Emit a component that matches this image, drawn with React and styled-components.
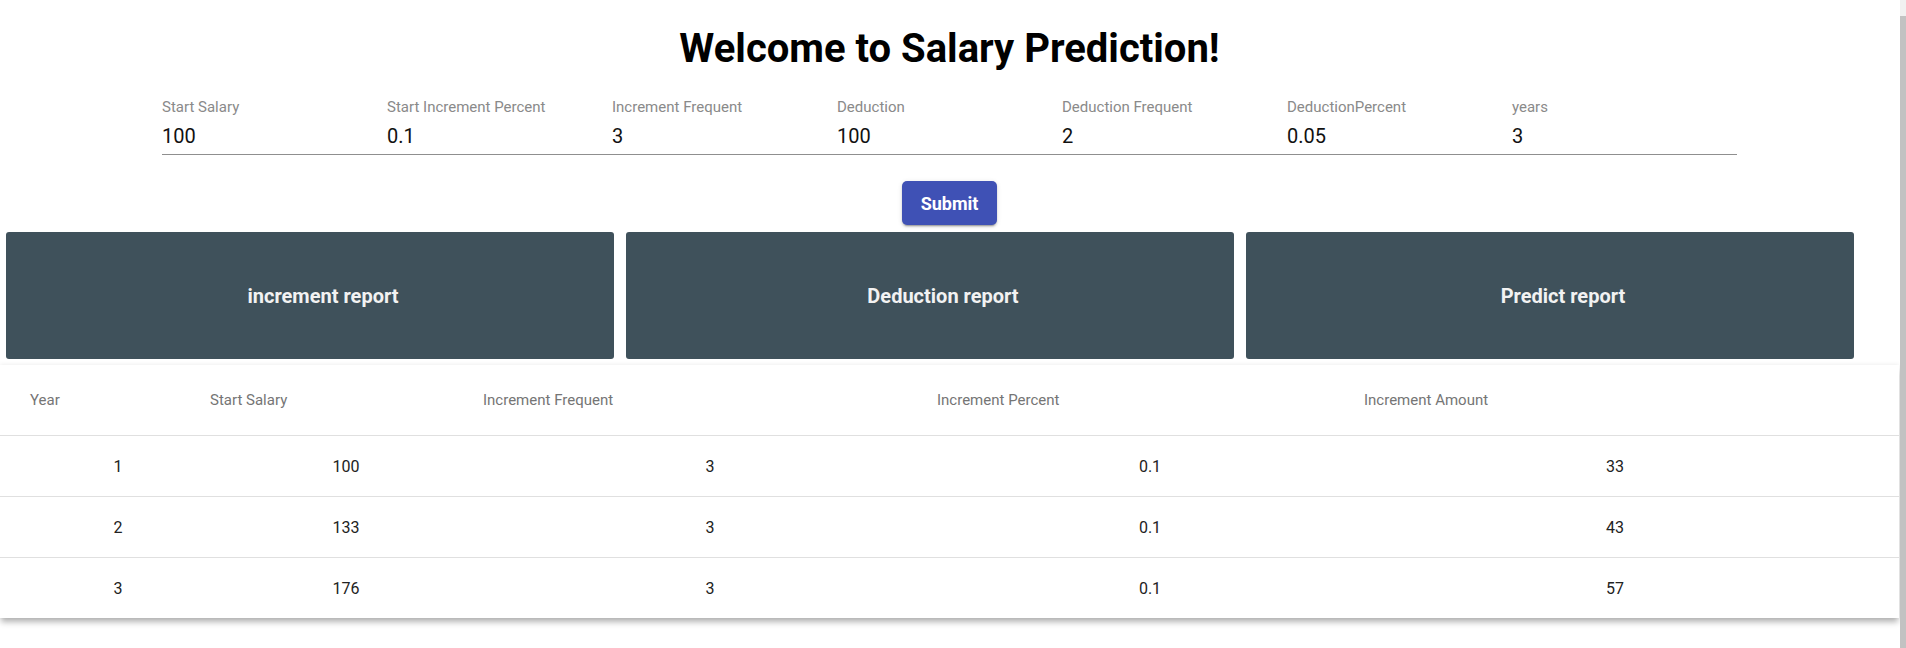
import React from "react"
import styled, { createGlobalStyle } from "styled-components"

const GlobalStyle = createGlobalStyle`
    body {
        margin: 0;
        background: #fff;
        font-family: Roboto, "Helvetica Neue", Arial, sans-serif;
        color: rgba(0, 0, 0, 0.87);
        overflow: hidden;
    }
`

const Page = styled.div`
    width: 1899px;
    height: 648px;
`

// the browser's scrollbar, cut off at the right edge of the shot
const ScrollBar = styled.div`
    position: fixed;
    top: 0;
    right: 0;
    width: 6px;
    height: 100%;
    background: #f1f1f1;
    &::after {
        content: "";
        position: absolute;
        top: 16px;
        left: 0;
        right: 0;
        bottom: 0;
        background: #c2c2c2;
    }
`

const Title = styled.h1`
    margin: 25px 0 0;
    font-size: 40px;
    line-height: 48px;
    font-weight: 700;
    text-align: center;
    color: #000;
`

const Form = styled.form`
    display: flex;
    flex-direction: column;
    align-items: center;
`

const Fields = styled.div`
    display: grid;
    grid-template-columns: repeat(7, 225px);
    margin-top: 24px;
    border-bottom: 1px solid #8f8f8f;
`

const Field = styled.label`
    display: flex;
    flex-direction: column;
`

const Label = styled.span`
    font-size: 15px;
    line-height: 20px;
    color: #8a8a8a;
`

const Input = styled.input`
    margin-top: 6px;
    padding: 0 0 5px;
    height: 26px;
    border: none;
    outline: none;
    background: transparent;
    font-family: inherit;
    font-size: 20px;
    color: #111;
`

const Submit = styled.button`
    margin-top: 26px;
    width: 95px;
    height: 44px;
    border: none;
    border-radius: 5px;
    background: #3f51b5;
    color: #fff;
    font-family: inherit;
    font-size: 18px;
    font-weight: 700;
    box-shadow: 0 3px 1px -2px rgba(0,0,0,.2), 0 2px 2px 0 rgba(0,0,0,.14), 0 1px 5px 0 rgba(0,0,0,.12);
    cursor: pointer;
`

const Reports = styled.div`
    display: grid;
    grid-template-columns: repeat(3, 608px);
    gap: 12px;
    margin-top: 7px;
    padding-left: 6px;
`

const ReportCard = styled.div`
    height: 127px;
    padding-left: 26px;
    display: flex;
    align-items: center;
    justify-content: center;
    border-radius: 3px;
    background: #3f515b;
    color: #f2f2f2;
    font-size: 20px;
    font-weight: 700;
    cursor: pointer;
`

const Paper = styled.div`
    margin-top: 6px;
    width: 1899px;
    background: #fff;
    box-shadow: 0 5px 6px -1px rgba(0,0,0,.3), 0 -1px 4px rgba(0,0,0,.06);
`

const columns = [
    { width: 194, head: 30, body: 42, end: 0 },
    { width: 273, head: 16, body: 31, end: 0 },
    { width: 454, head: 16, body: 32, end: 0 },
    { width: 427, head: 16, body: 31, end: 0 },
    { width: 551, head: 16, body: 0, end: 17 },
]

const Row = styled.div`
    display: grid;
    grid-template-columns: ${columns.map((c) => c.width + "px").join(" ")};
    height: ${(p) => (p.$head ? 70 : 60)}px;
    align-items: center;
    border-bottom: ${(p) => (p.$last ? "none" : "1px solid #e0e0e0")};
`

const HeadCell = styled.div`
    padding-left: ${(p) => p.$pad}px;
    font-size: 15px;
    color: #757575;
`

const Cell = styled.div`
    padding-left: ${(p) => p.$pad}px;
    padding-right: ${(p) => p.$end}px;
    text-align: center;
    font-size: 16px;
    color: #222;
`

const fields = [
    ["Start Salary", "100"],
    ["Start Increment Percent", "0.1"],
    ["Increment Frequent", "3"],
    ["Deduction", "100"],
    ["Deduction Frequent", "2"],
    ["DeductionPercent", "0.05"],
    ["years", "3"],
]

const heads = ["Year", "Start Salary", "Increment Frequent", "Increment Percent", "Increment Amount"]

const rows = [
    [1, 100, 3, 0.1, 33],
    [2, 133, 3, 0.1, 43],
    [3, 176, 3, 0.1, 57],
]

const App = () => {
    return (
        <Page>
            <GlobalStyle />
            <Title>Welcome to Salary Prediction!</Title>
            <Form onSubmit={(e) => e.preventDefault()}>
                <Fields>
                    {fields.map(([label, value]) => (
                        <Field key={label}>
                            <Label>{label}</Label>
                            <Input defaultValue={value} />
                        </Field>
                    ))}
                </Fields>
                <Submit type="submit">Submit</Submit>
            </Form>
            <Reports>
                <ReportCard>increment report</ReportCard>
                <ReportCard>Deduction report</ReportCard>
                <ReportCard>Predict report</ReportCard>
            </Reports>
            <Paper>
                <Row $head>
                    {heads.map((h, i) => (
                        <HeadCell key={h} $pad={columns[i].head}>{h}</HeadCell>
                    ))}
                </Row>
                {rows.map((r, ri) => (
                    <Row key={ri} $last={ri === rows.length - 1}>
                        {r.map((v, i) => (
                            <Cell key={i} $pad={columns[i].body} $end={columns[i].end}>{v}</Cell>
                        ))}
                    </Row>
                ))}
            </Paper>
            <ScrollBar />
        </Page>
    )
}

export default App
